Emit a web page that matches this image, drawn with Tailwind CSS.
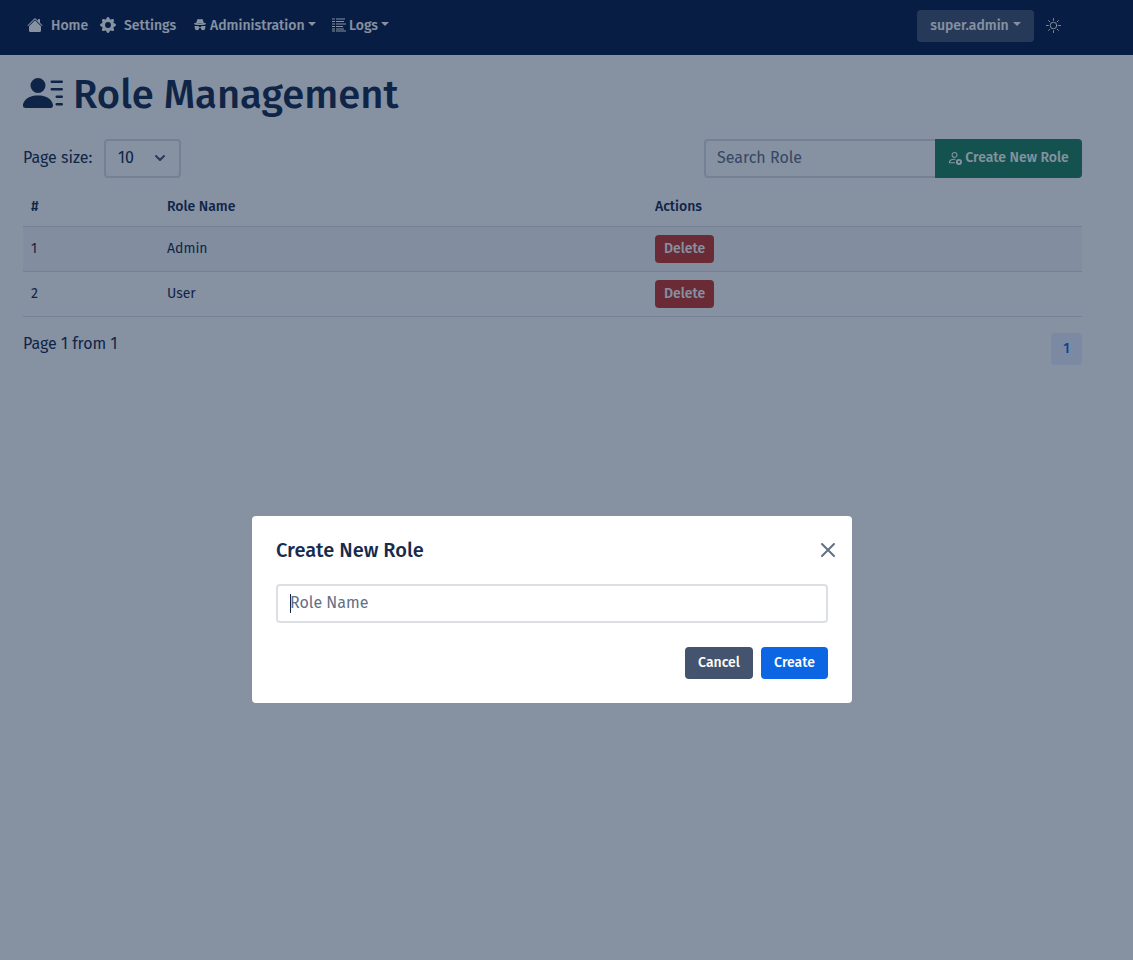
<!DOCTYPE html>
<html lang="en">
<head>
<meta charset="utf-8">
<meta name="viewport" content="width=device-width, initial-scale=1">
<title>Role Management</title>
<script src="https://cdn.jsdelivr.net/npm/@tailwindcss/browser@4"></script>
</head>
<body class="min-h-screen bg-white font-['Fira_Sans','Open_Sans','Noto_Sans',sans-serif] text-base leading-6 text-[#172b4d]">

<header class="flex h-[55px] items-start bg-[#071c48] pt-[10px] pr-[72px] pl-[27px] text-sm font-medium text-white">
  <nav class="flex h-8 items-center">
    <a href="#" class="flex w-[73px] items-center gap-2">
      <svg class="mb-[2px] size-4 shrink-0" viewBox="0 0 16 16" fill="currentColor"><path d="M8.707 1.5a1 1 0 0 0-1.414 0L.646 8.146a.5.5 0 0 0 .708.708L8 2.207l6.646 6.647a.5.5 0 0 0 .708-.708L13 5.793V2.5a.5.5 0 0 0-.5-.5h-1a.5.5 0 0 0-.5.5v1.293z"/><path d="m8 3.293 6 6V13.5a1.5 1.5 0 0 1-1.5 1.5h-9A1.5 1.5 0 0 1 2 13.5V9.293z"/></svg>
      Home
    </a>
    <a href="#" class="flex w-[93px] items-center gap-2">
      <svg class="mb-[2px] size-4 shrink-0" viewBox="0 0 16 16" fill="currentColor"><path d="M9.405 1.05c-.413-1.4-2.397-1.4-2.81 0l-.1.34a1.464 1.464 0 0 1-2.105.872l-.31-.17c-1.283-.698-2.686.705-1.987 1.987l.169.311c.446.82.023 1.841-.872 2.105l-.34.1c-1.4.413-1.4 2.397 0 2.81l.34.1a1.464 1.464 0 0 1 .872 2.105l-.17.31c-.698 1.283.705 2.686 1.987 1.987l.311-.169a1.464 1.464 0 0 1 2.105.872l.1.34c.413 1.4 2.397 1.4 2.81 0l.1-.34a1.464 1.464 0 0 1 2.105-.872l.31.17c1.283.698 2.686-.705 1.987-1.987l-.169-.311a1.464 1.464 0 0 1 .872-2.105l.34-.1c1.4-.413 1.4-2.397 0-2.81l-.34-.1a1.464 1.464 0 0 1-.872-2.105l.17-.31c.698-1.283-.705-2.686-1.987-1.987l-.311.169a1.464 1.464 0 0 1-2.105-.872zM8 10.93a2.929 2.929 0 1 1 0-5.86 2.929 2.929 0 0 1 0 5.858z"/></svg>
      Settings
    </a>
    <button type="button" class="flex w-[139px] items-center gap-[3px]">
      <svg class="mb-[2px] size-[14px] shrink-0" viewBox="0 0 16 16" fill="currentColor"><path d="m4.736 1.968-.892 3.269-.014.058C2.113 5.568 1 6.006 1 6.5 1 7.328 4.134 8 8 8s7-.672 7-1.5c0-.494-1.113-.932-2.83-1.205l-.014-.058-.892-3.27c-.146-.533-.698-.849-1.239-.734C9.411 1.363 8.62 1.5 8 1.5s-1.411-.136-2.025-.267c-.541-.115-1.093.2-1.239.735m.015 3.867a.25.25 0 0 1 .274-.224c.9.092 1.91.143 2.975.143a30 30 0 0 0 2.975-.143.25.25 0 0 1 .05.498c-.918.093-1.944.145-3.025.145s-2.107-.052-3.025-.145a.25.25 0 0 1-.224-.274"/><path d="M2 9h3.500a1.500 1.500 0 0 1 1.488 1.312 3.500 3.500 0 0 1 2.024 0A1.500 1.500 0 0 1 10.500 9H14a.5.5 0 0 1 0 1v1.500a2.500 2.500 0 0 1-5 0v-.14a2.500 2.500 0 0 0-2 0v.14a2.500 2.500 0 0 1-5 0V10a.5.5 0 0 1 0-1"/></svg>
      Administration
      <svg class="mb-1 h-1 w-2 shrink-0" viewBox="0 0 8 4" fill="currentColor"><path d="M0 0h8L4 4z"/></svg>
    </button>
    <button type="button" class="flex items-center gap-[3px]">
      <svg class="mb-[2px] size-[14px] shrink-0" viewBox="0 0 14 14" stroke="currentColor" stroke-width="1"><path d="M0 1h3m1 0h9M0 3.500h3m1 0h8M0 6h3m1 0h10M0 8.500h3m1 0h7M0 11h3m1 0h8M0 13h3m1 0h10"/></svg>
      Logs
      <svg class="mb-1 h-1 w-2 shrink-0" viewBox="0 0 8 4" fill="currentColor"><path d="M0 0h8L4 4z"/></svg>
    </button>
  </nav>
  <div class="ml-auto flex h-8 items-center gap-3">
    <button type="button" class="flex h-8 w-[117px] items-center justify-center gap-1 rounded-[4px] bg-[#44546f]">
      super.admin
      <svg class="mb-1 h-1 w-2 shrink-0" viewBox="0 0 8 4" fill="currentColor"><path d="M0 0h8L4 4z"/></svg>
    </button>
    <button type="button" aria-label="Toggle theme" class="pb-[2px]">
      <svg class="size-[15px]" viewBox="0 0 16 16" fill="none" stroke="currentColor" stroke-linecap="round"><circle cx="8" cy="8" r="3.500"/><path d="M8 .5v2M8 13.500v2M.5 8h2M13.500 8h2M2.700 2.700l1.400 1.400M11.900 11.900l1.400 1.400M2.700 13.300l1.400-1.400M11.900 4.100l1.400-1.400"/></svg>
    </button>
  </div>
</header>

<main class="pt-4 pr-[51px] pl-[23px]">
  <h1 class="flex h-12 items-center gap-[10px] text-[40px] leading-[48px] font-medium">
    <svg class="mb-1 size-10 shrink-0" viewBox="0 0 16 16" fill="currentColor"><path d="M6 8a3 3 0 1 0 0-6 3 3 0 0 0 0 6m-5 6s-1 0-1-1 1-4 6-4 6 3 6 4-1 1-1 1zM11 3.500a.5.5 0 0 1 .5-.5h4a.5.5 0 0 1 0 1h-4a.5.5 0 0 1-.5-.5m.5 2.500a.5.5 0 0 0 0 1h4a.5.5 0 0 0 0-1zm2 3a.5.5 0 0 0 0 1h2a.5.5 0 0 0 0-1zm0 3a.5.5 0 0 0 0 1h2a.5.5 0 0 0 0-1z"/></svg>
    Role Management
  </h1>

  <div class="mt-5 flex h-[39px] items-stretch">
    <label for="size" class="w-[81px] self-center pb-[2px]">Page size:</label>
    <div class="relative w-[77px]">
      <select id="size" class="h-full w-full appearance-none rounded-[4px] border-2 border-[#dcdfe4] pb-[2px] pl-3"><option>10</option></select>
      <svg class="pointer-events-none absolute top-[13px] right-[15px] size-3 text-[#44546f]" viewBox="0 0 12 12" fill="none" stroke="currentColor" stroke-width="2" stroke-linecap="round" stroke-linejoin="round"><path d="m2 4 4 4 4-4"/></svg>
    </div>
    <input type="text" aria-label="Search Role" placeholder="Search Role" class="ml-auto w-[231px] rounded-l-[4px] border-2 border-r-0 border-[#dcdfe4] px-[11px] pb-[2px] placeholder:text-[#626f86]">
    <button type="button" class="flex w-[147px] items-center justify-center gap-[3px] rounded-r-[4px] bg-[#1f845a] pb-[2px] text-sm font-medium whitespace-nowrap text-white">
      <svg class="size-[14px] shrink-0" viewBox="0 0 16 16" fill="none" stroke="currentColor"><circle cx="7.500" cy="4.500" r="2.800" stroke-width="1.200"/><path d="M8.500 9.600C3 9 1.500 11.500 1.500 13.500h6.500" stroke-width="1.200"/><circle cx="12.500" cy="12.500" r="2.400" stroke-width="2.200"/></svg>
      Create New Role
    </button>
  </div>

  <table class="mt-[10px] w-full table-fixed text-left text-sm">
    <thead>
      <tr class="h-[38px] border-b border-[#dcdfe4]">
        <th class="w-[136px] pt-px pl-2 font-medium">#</th>
        <th class="w-[488px] pt-px pl-2 font-medium">Role Name</th>
        <th class="pt-px pl-2 font-medium">Actions</th>
      </tr>
    </thead>
    <tbody>
      <tr class="h-[45px] border-b border-[#dcdfe4] bg-[#f7f8f9]">
        <td class="pl-2">1</td><td class="pl-2">Admin</td>
        <td class="pl-2"><button type="button" class="block h-7 w-[59px] rounded-[4px] bg-[#c9372c] font-medium text-white">Delete</button></td>
      </tr>
      <tr class="h-[45px] border-b border-[#dcdfe4]">
        <td class="pl-2">2</td><td class="pl-2">User</td>
        <td class="pl-2"><button type="button" class="block h-7 w-[59px] rounded-[4px] bg-[#c9372c] font-medium text-white">Delete</button></td>
      </tr>
    </tbody>
  </table>

  <div class="mt-4 flex items-start justify-between">
    <p class="leading-[22px]">Page 1 from 1</p>
    <a href="#" aria-current="page" class="flex h-8 w-[31px] items-center justify-center rounded-[4px] bg-[#e9f2ff] text-sm font-medium text-[#0c66e4]">1</a>
  </div>
</main>

<div class="fixed inset-0 flex items-start justify-center bg-[#091e42]/49 pt-[516px] pr-[29px]">
  <section role="dialog" aria-modal="true" aria-labelledby="dialog-title" class="w-[600px] rounded-[4px] bg-white p-6">
    <div class="-mr-2 flex h-5 items-center justify-between">
      <h2 id="dialog-title" class="text-xl font-medium">Create New Role</h2>
      <button type="button" aria-label="Close" class="text-[#626f86]"><svg class="size-4" viewBox="0 0 16 16" fill="none" stroke="currentColor" stroke-width="2" stroke-linecap="round"><path d="m2 2 12 12M14 2 2 14"/></svg></button>
    </div>
    <div class="relative mt-6">
      <input type="text" aria-label="Role Name" placeholder="Role Name" class="block h-[39px] w-full rounded-[4px] border-2 border-[#dcdfe4] px-3 pb-[2px] placeholder:text-[#626f86]">
      <span class="absolute top-[10px] left-[14px] h-[19px] w-px bg-[#172b4d]"></span>
    </div>
    <div class="mt-6 flex justify-end gap-2 text-sm font-medium text-white">
      <button type="button" class="h-8 w-[68px] rounded-[4px] bg-[#44546f]">Cancel</button>
      <button type="button" class="h-8 w-[67px] rounded-[4px] bg-[#0c66e4]">Create</button>
    </div>
  </section>
</div>
</body>
</html>
